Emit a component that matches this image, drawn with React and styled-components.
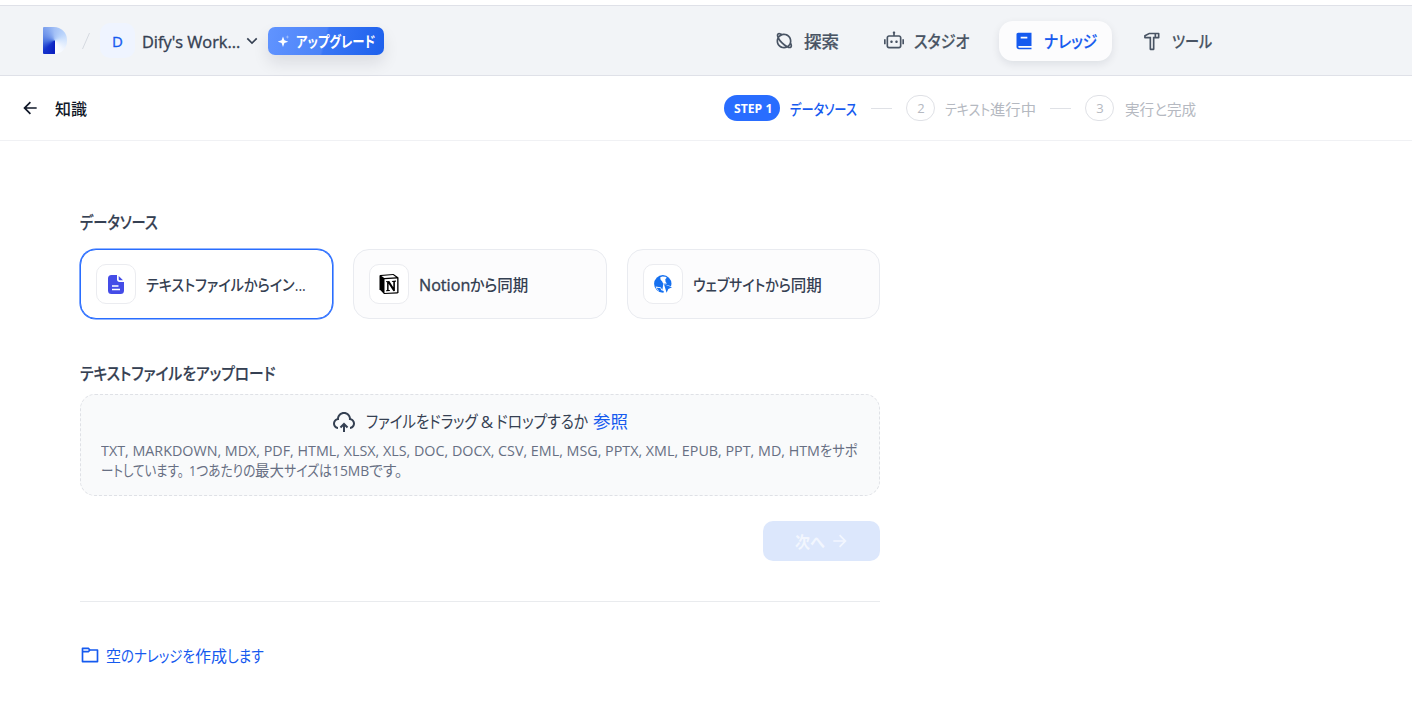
import React, { useLayoutEffect, useRef, useState } from 'react'
import styled, { createGlobalStyle, css } from 'styled-components'
import {
  RiPlanetLine, RiRobot2Line, RiBook2Fill, RiHammerLine, RiArrowDownSLine,
  RiArrowLeftLine, RiArrowRightLine, RiUploadCloud2Line, RiFolder6Line,
} from 'react-icons/ri'

// condensed kana: squeezes a run of text into the given width
const Fit = ({ width, children }) => {
  const ref = useRef(null)
  const [scale, setScale] = useState(1)
  useLayoutEffect(() => {
    setScale(width / ref.current.offsetWidth)
  }, [width])
  return <Run $w={width}>
    <span ref={ref} style={{ transform: `scaleX(${scale})` }}>{children}</span>
  </Run>
}

const Sparkle = () => (
  <SparkleMark viewBox="0 0 12 12">
    <path d="M5 1.4L6.400 5.300L10.300 6.700L6.400 8.100L5 12L3.600 8.100L-0.300 6.700L3.600 5.300z" fill="#fff" />
    <path d="M9.4 0L9.9 1.4L11.4 2L9.9 2.6L9.4 4L8.9 2.6L7.4 2L8.9 1.4z" fill="#fff" opacity="0.45" />
  </SparkleMark>
)

const FileIcon = () => (
  <svg width="16" height="19" viewBox="0 0 16 19">
    <path d="M3.5 0H9v4.5C9 6 10 7 11.500 7H16v8.500A3.500 3.500 0 0 1 12.500 19h-9A3.500 3.500 0 0 1 0 15.500v-12A3.500 3.500 0 0 1 3.500 0z" fill="#444ce7" />
    <path d="M10.700 1L15 5.300H11.700a1 1 0 0 1-1-1z" fill="#444ce7" />
    <path d="M4 11h6.500M4 14.500h8" stroke="#fff" strokeWidth="1.500" />
  </svg>
)

const NotionIcon = () => (
  <svg width="20" height="20" viewBox="0 0 20 20">
    <path d="M1.200 0.900L14.500 0L19.500 3.600V18.500L18.500 19.500L5 20L0.500 15.200V1.800z" fill="#000" />
    <path d="M2.400 1.900L14 1.100L17 3.200L5.300 4z" fill="#fff" />
    <path d="M5.500 5.300L18.200 4.500V18.200L5.500 18.900z" fill="#fff" />
    <path d="M7 7.200L10.300 7L14.300 13.300V8L12.900 7.700V6.900L17 6.600V7.400L15.900 7.900V17L14.400 17.200L9.600 9.800V15.900L11 16.300V17.100L7 17.300V16.500L8.100 16V8.300L7 8z" fill="#000" />
  </svg>
)

const GlobeIcon = () => (
  <svg width="18" height="18" viewBox="0 0 18 18">
    <circle cx="8.800" cy="8.800" r="8.700" fill="#1570ef" />
    <path d="M6.300 2.200L8.300 1.400L11.500 1.700L12.800 2.700L11.300 4.200L11.600 7L13 8.400L9.200 8.700L8.200 6.500L6.500 4.500z" fill="#fff" />
    <path d="M1.600 11.400L6.500 12.200L8.400 14.700L9.300 9L18 11.500V18H9.700L8.500 16.300L5 16L2.600 14z" fill="#fff" />
    <path d="M2.500 12.700L6.300 12.900L7.400 15.300L9.700 16V17.500L6 17.100z" fill="#1570ef" />
    <path d="M10 9.200L18 12.300L14.300 13.900L12.600 17.700z" fill="#1570ef" />
  </svg>
)

const navItems = [
  { label: '探索', width: 35, icon: RiPlanetLine },
  { label: 'スタジオ', width: 55, icon: RiRobot2Line },
  { label: 'ナレッジ', width: 53, icon: RiBook2Fill, active: true },
  { label: 'ツール', width: 40, icon: RiHammerLine },
]

const App = () => {
  return <>
    <GlobalStyle />
    <Header>
      <Brand>
        <Logo />
        <Slash viewBox="0 0 8 16"><path d="M0.500 16L7.500 0" stroke="#d5d9e0" fill="none" /></Slash>
        <Avatar>D</Avatar>
        <Workspace><Fit width={98}>Dify's Work...</Fit></Workspace>
        <RiArrowDownSLine size={20} />
        <Upgrade><Sparkle /><Fit width={79}>アップグレード</Fit></Upgrade>
      </Brand>
      <Nav>
        {navItems.map(({ label, width, icon: Icon, active }) => (
          <NavItem key={label} $active={active}>
            <Icon size={20} />
            <NavLabel><Fit width={width}>{label}</Fit></NavLabel>
          </NavItem>
        ))}
      </Nav>
    </Header>

    <SubHeader>
      <Back>
        <RiArrowLeftLine size={20} />
        <BackLabel><Fit width={32}>知識</Fit></BackLabel>
      </Back>
      <Steps>
        <StepBadge><Fit width={38}>STEP 1</Fit></StepBadge>
        <StepLabel $active><Fit width={67}>データソース</Fit></StepLabel>
        <StepLine />
        <StepNumber>2</StepNumber>
        <StepLabel><Fit width={45}>テキスト</Fit><Fit width={46}>進行中</Fit></StepLabel>
        <StepLine />
        <StepNumber>3</StepNumber>
        <LastLabel><Fit width={71}>実行と完成</Fit></LastLabel>
      </Steps>
    </SubHeader>

    <Content>
      <SectionTitle><Fit width={78}>データソース</Fit></SectionTitle>
      <Sources>
        <SourceCard $active>
          <SourceIcon><FileIcon /></SourceIcon>
          <SourceName><Fit width={160}>テキストファイルからイン...</Fit></SourceName>
        </SourceCard>
        <SourceCard>
          <SourceIcon><NotionIcon /></SourceIcon>
          <SourceName>
            <Latin><Fit width={51}>Notion</Fit></Latin><Fit width={27}>から</Fit><Fit width={31}>同期</Fit>
          </SourceName>
        </SourceCard>
        <SourceCard>
          <SourceIcon><GlobeIcon /></SourceIcon>
          <SourceName><Fit width={98}>ウェブサイトから</Fit><Fit width={31}>同期</Fit></SourceName>
        </SourceCard>
      </Sources>

      <UploadTitle><Fit width={195}>テキストファイルをアップロード</Fit></UploadTitle>
      <DropZone>
        <DropPrompt>
          <RiUploadCloud2Line size={24} />
          <Fit width={112}>ファイルをドラッグ</Fit>
          <Amp>&amp;</Amp>
          <Fit width={92}>ドロップするか</Fit>
          <Browse><Fit width={35}>参照</Fit></Browse>
        </DropPrompt>
        <Hint>
          <Fit width={719}>TXT, MARKDOWN, MDX, PDF, HTML, XLSX, XLS, DOC, DOCX, CSV, EML, MSG, PPTX, XML, EPUB, PPT, MD, HTM</Fit>
          <Fit width={37}>をサポ</Fit>
        </Hint>
        <Hint>
          <Sentence><Fit width={83}>ートしています。</Fit></Sentence>
          <Fit width={66}>1つあたりの</Fit>
          <Fit width={29}>最大</Fit>
          <Fit width={48}>サイズは</Fit>
          <Fit width={37}>15MB</Fit>
          <Fit width={33}>です。</Fit>
        </Hint>
      </DropZone>

      <Actions>
        <NextButton disabled><NextLabel><Fit width={30}>次へ</Fit></NextLabel><RiArrowRightLine size={20} /></NextButton>
      </Actions>
      <Divider />
      <CreateEmpty>
        <RiFolder6Line size={20} />
        <CreateLabel>
          <Fit width={15}>空</Fit><Fit width={74}>のナレッジを</Fit><Fit width={32}>作成</Fit><Fit width={37}>します</Fit>
        </CreateLabel>
      </CreateEmpty>
    </Content>
  </>
}

const GlobalStyle = createGlobalStyle`
  * {
    box-sizing: border-box;
  }
  body {
    margin: 0;
    background: #fff;
    color: #354052;
    font-family: 'Open Sans', 'Noto Sans CJK JP', sans-serif;
    font-feature-settings: 'palt';
    overflow: hidden;
  }
  svg {
    flex-shrink: 0;
  }
`

const Run = styled.span`
  display: inline-block;
  flex-shrink: 0;
  width: ${({ $w }) => $w}px;
  white-space: nowrap;
  span {
    display: inline-block;
    transform-origin: 0 50%;
  }
`

const Header = styled.header`
  display: flex;
  height: 71px;
  margin-top: 5px;
  background: #f2f4f7;
  border-top: 1px solid #dfe1e8;
  border-bottom: 1px solid #dfe1e8;
`

const Brand = styled.div`
  display: flex;
  align-items: center;
  width: 768px;
  padding-left: 43px;
  color: #354052;
`

const Logo = styled.div`
  width: 24px;
  height: 27px;
  border-radius: 1px 13px 13px 1px;
  background: conic-gradient(
    at 48% 50%,
    #a3c0f6 0deg, #b9d3fb 50deg, #d6e6fd 90deg, #f4f8ff 140deg, #fff 180deg,
    #0a1fc0 180deg, #1533cc 225deg, #4a73e0 265deg, #6a8fe8 295deg, #86a8f0 330deg, #a3c0f6 360deg
  );
`

const Slash = styled.svg`
  width: 8px;
  height: 16px;
  margin-left: 15px;
`

const Avatar = styled.div`
  display: flex;
  align-items: center;
  justify-content: center;
  width: 35px;
  height: 35px;
  margin-left: 10px;
  padding-top: 1px;
  border-radius: 10px;
  background: #eff4ff;
  color: #155aef;
  font-size: 15px;
  -webkit-text-stroke: 0.3px;
`

const Workspace = styled.div`
  margin: 3px 0 0 7px;
  font-size: 16px;
  line-height: 24px;
  -webkit-text-stroke: 0.35px;
  & + svg {
    margin-left: 2px;
  }
`

const Upgrade = styled.button`
  display: flex;
  align-items: center;
  gap: 6px;
  width: 116px;
  height: 28px;
  margin-left: 6px;
  padding: 0 0 0 10px;
  border: none;
  border-radius: 7px;
  background: linear-gradient(105deg, #6194ff 0%, #4c83f8 48%, #3976f5 50%, #1d60ec 100%);
  box-shadow: 0 8px 16px rgba(16, 24, 40, 0.1);
  color: #fff;
  font: 700 15px/24px 'Open Sans', 'Noto Sans CJK JP', sans-serif;
  font-feature-settings: 'palt';
`

const SparkleMark = styled.svg`
  width: 12px;
  height: 12px;
`

const Nav = styled.nav`
  display: flex;
  align-items: center;
  gap: 15px;
  margin-left: -9px;
`

const NavItem = styled.a`
  display: flex;
  align-items: center;
  gap: 10px;
  height: 40px;
  padding: 0 15px;
  border-radius: 14px;
  color: #495464;
  font-size: 17px;
  line-height: 24px;
  font-weight: 500;
  ${({ $active }) => $active && css`
    background: #fcfcfd;
    color: #155aef;
    box-shadow: 0 3px 8px rgba(16, 24, 40, 0.09);
  `}
`

const NavLabel = styled.span`
  padding-top: 2px;
  -webkit-text-stroke: 0.2px;
`

const SubHeader = styled.div`
  display: flex;
  align-items: center;
  justify-content: space-between;
  height: 65px;
  padding: 0 216px 0 20px;
  border-bottom: 1px solid #f0f1f4;
`

const Back = styled.div`
  display: flex;
  align-items: center;
  gap: 15px;
  color: #101828;
  font-size: 16px;
  line-height: 24px;
  font-weight: 500;
`

const BackLabel = styled.span`
  padding-top: 2px;
`

const Steps = styled.div`
  display: flex;
  align-items: center;
`

const StepBadge = styled.div`
  display: flex;
  align-items: center;
  justify-content: center;
  width: 56px;
  height: 26px;
  padding-left: 1px;
  border-radius: 13px;
  background: #296dff;
  color: #fff;
  font-size: 12.5px;
  font-weight: 700;
`

const StepLabel = styled.div`
  margin: 2px 0 0 10px;
  color: ${({ $active }) => ($active ? '#155aef' : '#b5b9c1')};
  font-size: 15px;
  line-height: 22px;
  font-weight: ${({ $active }) => ($active ? 500 : 400)};
`

const LastLabel = styled(StepLabel)`
  margin-left: 11px;
`

const StepLine = styled.div`
  width: 21px;
  height: 1px;
  margin: 0 14px;
  background: #dfe1e6;
`

const StepNumber = styled.div`
  display: flex;
  align-items: center;
  justify-content: center;
  width: 29px;
  height: 26px;
  padding-left: 1px;
  border: 1px solid #dfe1e6;
  border-radius: 13px;
  color: #b5b9c1;
  font-size: 13px;
`

const Content = styled.main`
  width: 800px;
  margin: 70px 0 0 80px;
`

const SectionTitle = styled.h2`
  margin: 0;
  font-size: 17px;
  line-height: 24px;
  font-weight: 500;
  -webkit-text-stroke: 0.2px;
`

const Sources = styled.div`
  display: grid;
  grid-template-columns: repeat(3, 1fr);
  gap: 20px;
  margin-top: 14px;
`

const SourceCard = styled.div`
  display: flex;
  align-items: center;
  height: 70px;
  padding-left: 15px;
  border: 1px solid #e9ebf0;
  border-radius: 16px;
  background: #fcfcfd;
  ${({ $active }) => $active && css`
    border-color: #296dff;
    background: #fff;
    box-shadow: 0 0 0 0.6px #296dff;
  `}
`

const SourceIcon = styled.div`
  display: flex;
  align-items: center;
  justify-content: center;
  width: 40px;
  height: 40px;
  margin-right: 10px;
  border: 1px solid #ebecf0;
  border-radius: 10px;
  background: #fff;
`

const SourceName = styled.div`
  display: flex;
  padding-top: 2px;
  font-size: 15.5px;
  line-height: 24px;
  font-weight: 500;
`

const Latin = styled.span`
  -webkit-text-stroke: 0.35px;
`

const UploadTitle = styled(SectionTitle)`
  margin-top: 43px;
`

const DropZone = styled.div`
  height: 102px;
  margin-top: 8px;
  padding: 15px 20px;
  border: 1px dashed #dfe1e6;
  border-radius: 15px;
  background: #f9fafb;
`

const DropPrompt = styled.div`
  display: flex;
  align-items: center;
  justify-content: center;
  height: 24px;
  margin-bottom: 6px;
  font-size: 17px;
  line-height: 24px;
  svg {
    margin-right: 10px;
  }
`

const Amp = styled.span`
  width: 18px;
  text-align: center;
`

const Browse = styled.a`
  margin-left: 5px;
  color: #155aef;
`

const Hint = styled.div`
  display: flex;
  height: 20px;
  color: #676f83;
  font-size: 15px;
  line-height: 20px;
`

const Sentence = styled.span`
  margin-right: 5px;
`

const Actions = styled.div`
  display: flex;
  justify-content: flex-end;
  margin-top: 25px;
`

const NextButton = styled.button`
  display: flex;
  align-items: center;
  justify-content: center;
  gap: 5px;
  width: 117px;
  height: 40px;
  padding: 0 0 0 2px;
  border: none;
  border-radius: 10px;
  background: #dce7fc;
  color: #f2f6fe;
  font: 700 16px/24px 'Open Sans', 'Noto Sans CJK JP', sans-serif;
  font-feature-settings: 'palt';
`

const NextLabel = styled.span`
  padding-top: 2px;
`

const Divider = styled.div`
  height: 1px;
  margin: 40px 0;
  background: #e9ebee;
`

const CreateEmpty = styled.a`
  display: flex;
  align-items: center;
  color: #155aef;
  line-height: 24px;
  svg {
    margin-right: 6px;
  }
`

const CreateLabel = styled.span`
  padding-top: 2px;
  font-size: 16px;
`

export default App
